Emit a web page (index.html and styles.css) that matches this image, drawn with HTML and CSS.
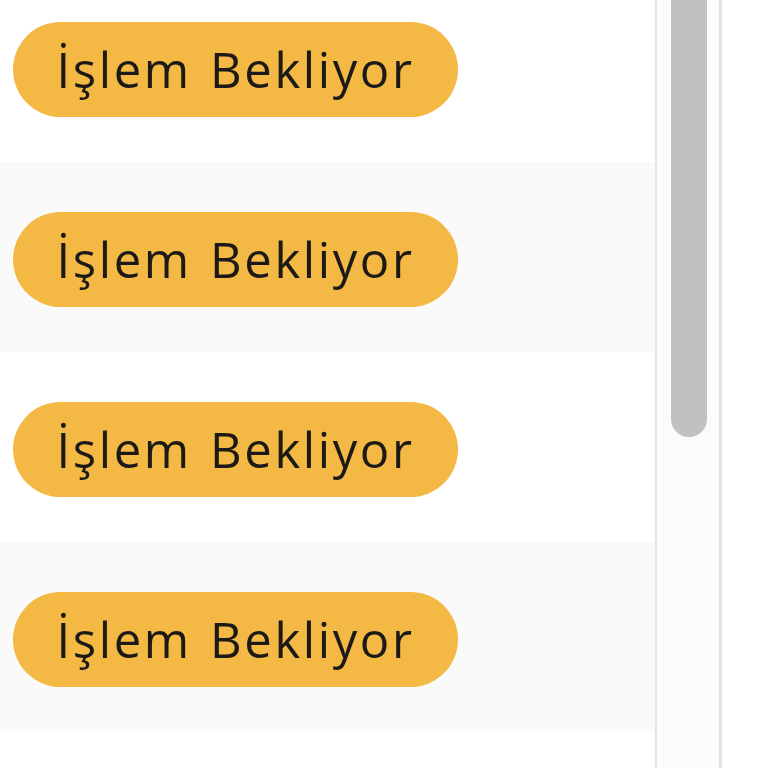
FILE: index.html
```html
<!DOCTYPE html>
<html lang="tr">
<head>
<meta charset="utf-8">
<link rel="stylesheet" href="styles.css">
</head>
<body>
<div class="frame">
  <div class="table">
    <div class="row first"><span class="badge">İşlem Bekliyor</span></div>
    <div class="row alt"><span class="badge">İşlem Bekliyor</span></div>
    <div class="row"><span class="badge">İşlem Bekliyor</span></div>
    <div class="row alt"><span class="badge">İşlem Bekliyor</span></div>
    <div class="row"></div>
  </div>
  <div class="scrollbar">
    <div class="thumb"></div>
  </div>
  <div class="outside"></div>
</div>
</body>
</html>
```

FILE: styles.css
```css
html, body {
  margin: 0;
  padding: 0;
  background: #ffffff;
  overflow: hidden;
}

.frame {
  display: flex;
  width: 768px;
  height: 768px;
  overflow: hidden;
}

.table {
  width: 655px;
  flex: none;
  display: flex;
  flex-direction: column;
}

.row {
  height: 190px;
  box-sizing: border-box;
  padding: 50px 0 0 13px;
  background: #ffffff;
  flex: none;
}

.row.first {
  height: 162px;
  padding-top: 22px;
}

.row.alt {
  background: #fafafa;
}

.badge {
  display: inline-flex;
  align-items: center;
  justify-content: center;
  box-sizing: border-box;
  width: 445px;
  height: 95px;
  border-radius: 48px;
  background: #f4b844;
  color: #1c1a16;
  font-family: "Open Sans", "Noto Sans", sans-serif;
  font-size: 49px;
  letter-spacing: 2.6px;
  word-spacing: 3px;
  padding-bottom: 2px;
}

.scrollbar {
  width: 67px;
  flex: none;
  box-sizing: border-box;
  border-left: 2px solid #e4e4e4;
  border-right: 3px solid #e2e2e2;
  background: #fbfbfb;
  padding-left: 14px;
}

.thumb {
  width: 36px;
  height: 437px;
  background: #c1c1c1;
  border-radius: 0 0 18px 18px;
}

.outside {
  flex: 1;
  background: #ffffff;
}
```
